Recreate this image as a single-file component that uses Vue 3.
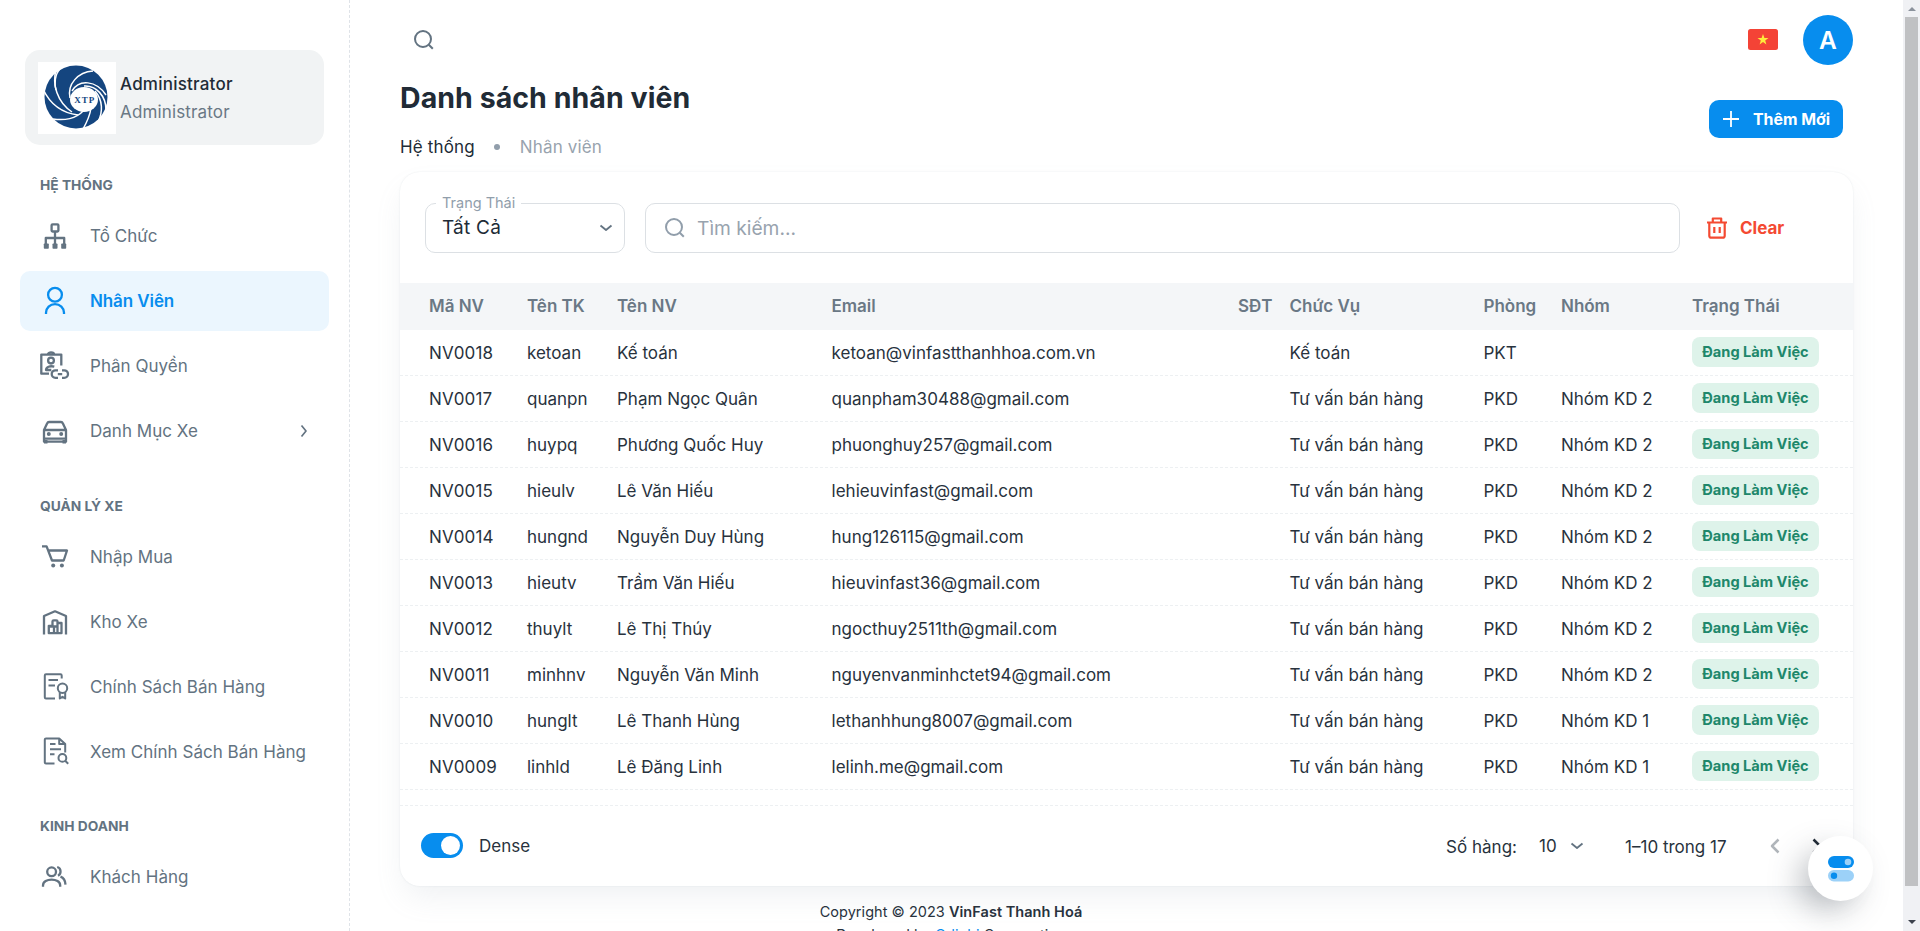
<script setup>
import { ref } from 'vue'

const groups = [
  {
    title: 'HỆ THỐNG',
    items: [
      { icon: 'org', label: 'Tổ Chức' },
      { icon: 'user', label: 'Nhân Viên', active: true },
      { icon: 'badge', label: 'Phân Quyền' },
      { icon: 'car', label: 'Danh Mục Xe', expandable: true }
    ]
  },
  {
    title: 'QUẢN LÝ XE',
    items: [
      { icon: 'cart', label: 'Nhập Mua' },
      { icon: 'warehouse', label: 'Kho Xe' },
      { icon: 'policy', label: 'Chính Sách Bán Hàng' },
      { icon: 'policySearch', label: 'Xem Chính Sách Bán Hàng' }
    ]
  },
  {
    title: 'KINH DOANH',
    items: [{ icon: 'users', label: 'Khách Hàng' }]
  }
]

const icons = {
  org: '<rect x="11.6" y="3.3" width="6.8" height="7.2" rx="1"/><path d="M15 10.5V24M5.8 24v-7h18.4v7"/><g fill="currentColor" stroke="none"><rect x="3.8" y="22.5" width="5" height="5.2" rx=".8"/><rect x="12.5" y="22.5" width="5" height="5.2" rx=".8"/><rect x="21.2" y="22.5" width="5" height="5.2" rx=".8"/></g>',
  user: '<circle cx="15" cy="8.7" r="6.9"/><path d="M6 28v-1.2a9 8.7 0 0 1 18 0V28"/>',
  badge: '<path d="M9 22.700H1.300V3.600h20V14.500"/><path d="M8 3.600C8 .8 14 .8 14 3.600"/><circle cx="11" cy="9.600" r="2.900"/><path d="M14.300 15.600c-4.300-1-8.300.3-8.300 3.400h5.300"/><path d="M18 19.300h-2.500a3.800 3.800 0 0 0 0 7.600H18M22 19.300h2.200a3.800 3.800 0 0 1 0 7.600H22M17.800 23.100h4.400"/>',
  car: '<path d="M4 14v11.700h22V14M4 14l3.200-6.800q.5-1.200 1.800-1.200h12q1.300 0 1.800 1.200L26 14zM4 22.700h22"/><g fill="currentColor" stroke="none"><circle cx="8.800" cy="18" r="2"/><circle cx="21.200" cy="18" r="2"/><path d="M4 24h3.500v3.600H4zM22.500 24H26v3.600h-3.500z"/></g>',
  cart: '<path d="M2 4.300h4.600l5.400 14.200h11.700L27 8.500H8.200"/><circle cx="13.200" cy="23.600" r="2" fill="currentColor" stroke="none"/><circle cx="21.900" cy="23.600" r="2" fill="currentColor" stroke="none"/>',
  warehouse: '<path d="M4 27.500V9l11-4.700L26 9v18.500"/><path d="M8.800 26.200v-7.400h3.700V14.500q0-1.200 1.200-1.200h2.600q1.200 0 1.200 1.200v11.700zM9 19.500h8.500M14 19.500v6.700M17.500 16h4v10.200h-4"/>',
  policy: '<path d="M15 26.500H6q-1.200 0-1.200-1.200V3.500q0-1.200 1.200-1.200h14.500q1.200 0 1.200 1.200V6.500M8.500 8h9.500M8.500 13.500h6.500"/><circle cx="22.500" cy="16.200" r="4.700"/><path d="M19.800 20.200v6.300l2.700-1.700 2.700 1.700v-6.300"/>',
  policySearch: '<path d="M14.500 26.500H6q-1.200 0-1.200-1.200V2.600q0-1.200 1.200-1.200h13.200L25.200 7v8.500M19.200 1.400V7h6M10 7h5.500M10 12.200h11M10 17.200h4.500"/><circle cx="22.400" cy="20.900" r="3.900"/><path d="m25.200 23.800 3 3"/>',
  users: '<circle cx="11.600" cy="9.800" r="4.400"/><path d="M3 24.800v-1.200c0-8 17.200-8 17.200 0v1.200M17.200 5c4.300 1 4.300 7 .8 8.700M20.500 14.600c3 1.200 4.800 4 5 8"/>'
}

const columns = ['Mã NV', 'Tên TK', 'Tên NV', 'Email', 'SĐT', 'Chức Vụ', 'Phòng', 'Nhóm', 'Trạng Thái']
const sales = 'Tư vấn bán hàng'
const rows = [
  ['NV0018', 'ketoan', 'Kế toán', 'ketoan@vinfastthanhhoa.com.vn', '', 'Kế toán', 'PKT', ''],
  ['NV0017', 'quanpn', 'Phạm Ngọc Quân', 'quanpham30488@gmail.com', '', sales, 'PKD', 'Nhóm KD 2'],
  ['NV0016', 'huypq', 'Phương Quốc Huy', 'phuonghuy257@gmail.com', '', sales, 'PKD', 'Nhóm KD 2'],
  ['NV0015', 'hieulv', 'Lê Văn Hiếu', 'lehieuvinfast@gmail.com', '', sales, 'PKD', 'Nhóm KD 2'],
  ['NV0014', 'hungnd', 'Nguyễn Duy Hùng', 'hung126115@gmail.com', '', sales, 'PKD', 'Nhóm KD 2'],
  ['NV0013', 'hieutv', 'Trầm Văn Hiếu', 'hieuvinfast36@gmail.com', '', sales, 'PKD', 'Nhóm KD 2'],
  ['NV0012', 'thuylt', 'Lê Thị Thúy', 'ngocthuy2511th@gmail.com', '', sales, 'PKD', 'Nhóm KD 2'],
  ['NV0011', 'minhnv', 'Nguyễn Văn Minh', 'nguyenvanminhctet94@gmail.com', '', sales, 'PKD', 'Nhóm KD 2'],
  ['NV0010', 'hunglt', 'Lê Thanh Hùng', 'lethanhhung8007@gmail.com', '', sales, 'PKD', 'Nhóm KD 1'],
  ['NV0009', 'linhld', 'Lê Đăng Linh', 'lelinh.me@gmail.com', '', sales, 'PKD', 'Nhóm KD 1']
]
const blades = [
  'M18 8C14 22 19 40 34 50',
  'M5 27C12 42 24 51 40 53',
  'M32 36C29 22 40 10 55 9',
  'M34 29C41 17 58 18 68 33',
  'M46 24C58 23 68 34 68 48',
  'M57 29C65 38 65 50 60 60',
  'M53 46C52 53 49 60 45 67',
  'M50 42C43 56 30 59 15 57',
  'M18 28C16 22 17 12 22 7'
]
const dense = ref(true)
</script>

<template>
  <div class="page">
    <aside class="sidebar">
      <div class="account">
        <svg class="logo" viewBox="0 0 78 72">
          <rect width="78" height="72" fill="#fff" />
          <circle cx="38" cy="35" r="31.500" fill="#14457f" />
          <g fill="none" stroke="#fff" stroke-width="1.500">
            <path v-for="d in blades" :key="d" :d="d" />
          </g>
          <ellipse cx="46" cy="37.500" rx="14" ry="12.500" fill="#fff" />
          <text x="46.800" y="40.500" text-anchor="middle" class="logo-text">XTP</text>
        </svg>
        <div>
          <div class="name">Administrator</div>
          <div class="role">Administrator</div>
        </div>
      </div>
      <nav v-for="g in groups" :key="g.title">
        <h6>{{ g.title }}</h6>
        <div v-for="i in g.items" :key="i.label" class="item" :class="{ active: i.active }">
          <svg class="nav-icon" :class="{ fine: i.icon.startsWith('policy') }" viewBox="0 0 30 30" v-html="icons[i.icon]" />
          <span>{{ i.label }}</span>
          <svg v-if="i.expandable" class="more" viewBox="0 0 10 14"><path d="m2.500 1.500 4.500 5.500-4.500 5.500" /></svg>
        </div>
      </nav>
    </aside>

    <main>
      <header class="topbar">
        <svg class="search" viewBox="0 0 24 24"><circle cx="11" cy="11" r="8" /><path d="m16.800 16.800 4 4" /></svg>
        <svg class="flag" viewBox="0 0 30 21">
          <rect width="30" height="21" rx="2.500" fill="#f44336" />
          <path fill="#ffeb3b" d="m15 5 1.400 4h4.100l-3.300 2.500 1.200 4-3.400-2.400-3.400 2.400 1.200-4L9.500 9h4.100z" />
        </svg>
        <div class="avatar">A</div>
      </header>

      <section class="heading">
        <div>
          <h1>Danh sách nhân viên</h1>
          <div class="crumbs"><span>Hệ thống</span><i></i><span class="muted">Nhân viên</span></div>
        </div>
        <button class="add">
          <svg viewBox="0 0 18 18"><path d="M9 1v16M1 9h16" /></svg>Thêm Mới
        </button>
      </section>

      <section class="card">
        <div class="filters">
          <fieldset class="select">
            <legend>Trạng Thái</legend>
            <span>Tất Cả</span>
            <svg class="caret" viewBox="0 0 14 8"><path d="m1.500 1.500 5.500 4.500 5.500-4.500" /></svg>
          </fieldset>
          <div class="field">
            <svg class="search" viewBox="0 0 24 24"><circle cx="11" cy="11" r="8" /><path d="m16.800 16.800 4 4" /></svg>
            <span>Tìm kiếm...</span>
          </div>
          <div class="clear">
            <svg viewBox="0 0 22 22"><path d="M1 5.500h20M6.800 5V1.500h8.400V5M3.300 5.500v13.200q0 2 2 2h11.400q2 0 2-2V5.500M8.300 10v6M13.700 10v6" /></svg>
            Clear
          </div>
        </div>

        <div class="row head"><span v-for="c in columns" :key="c">{{ c }}</span></div>
        <div v-for="r in rows" :key="r[0]" class="row">
          <span v-for="(v, n) in r" :key="n" :class="{ code: n === 0, mail: n === 3 }">{{ v }}</span>
          <b>Đang Làm Việc</b>
        </div>
        <div class="spacer"></div>

        <div class="foot">
          <div class="switch" :class="{ on: dense }" @click="dense = !dense"></div>
          <span>Dense</span>
          <span class="per-page">Số hàng:</span>
          <span class="count">10</span>
          <svg class="caret" viewBox="0 0 14 8"><path d="m1.500 1.500 5.500 4.500 5.500-4.500" /></svg>
          <span class="range">1–10 trong 17</span>
          <svg class="page-arrow off" viewBox="0 0 10 16"><path d="M8.500 1.500 2 8l6.500 6.500" /></svg>
          <svg class="page-arrow" viewBox="0 0 10 16"><path d="M1.500 1.500 8 8l-6.500 6.500" /></svg>
        </div>
      </section>

      <footer>
        <div>Copyright © 2023 <strong>VinFast Thanh Hoá</strong></div>
        <div>Developed by <a>Odinbi</a> Corporation</div>
      </footer>
    </main>

    <div class="fab">
      <svg viewBox="0 0 26 26">
        <rect width="26" height="12" rx="6" fill="#078dee" />
        <circle cx="20" cy="6" r="3.300" fill="#9cd1f8" />
        <rect y="14" width="26" height="11.500" rx="5.750" fill="#9cd1f8" />
        <circle cx="6" cy="19.800" r="3.200" fill="#078dee" />
      </svg>
    </div>

    <div class="scrollbar">
      <svg viewBox="0 0 8 4"><path d="M0 4 4 0l4 4z" fill="#8b929c" /></svg>
      <div class="thumb"></div>
      <svg viewBox="0 0 8 4"><path d="m0 0 4 4 4-4z" fill="#3c424c" /></svg>
    </div>
  </div>
</template>

<style>
body { margin: 0; overflow: hidden; }
</style>

<style scoped>
* { box-sizing: border-box; }
.page {
  position: relative;
  display: flex;
  width: 100%;
  height: 931px;
  overflow: hidden;
  background: #fff;
  color: #212b36;
  font: 400 17px/26px Inter, "Liberation Sans", sans-serif;
  white-space: nowrap;
}
svg { display: block; flex: none; fill: none; stroke-linejoin: round; }

.sidebar { flex: none; width: 350px; padding: 50px 20px 0; border-right: 1px dashed #dfe3e8; }
.account {
  display: flex;
  align-items: center;
  gap: 4px;
  height: 95px;
  margin: 0 5px;
  padding: 0 13px;
  border-radius: 15px;
  background: #f1f3f4;
}
.logo { width: 78px; height: 72px; }
.logo-text { font: 700 9px "Liberation Serif", serif; fill: #14457f; letter-spacing: 1px; }
.name, .role { line-height: 28px; }
.name { font-weight: 500; letter-spacing: .22px; }
.role { color: #6a7885; letter-spacing: .15px; }
nav + nav { margin-top: -.5px; }
h6 {
  height: 61px;
  margin: 0;
  padding: 30px 20px 0;
  color: #637381;
  font-size: 13.750px;
  font-weight: 700;
  line-height: 20px;
}
.item {
  display: flex;
  align-items: center;
  height: 60px;
  margin-bottom: 5px;
  padding: 0 20px;
  border-radius: 10px;
  color: #637381;
}
.item span { flex: 1; margin-left: 20px; letter-spacing: .03px; }
.item.active { background: #ebf6fe; color: #078dee; }
.item.active span { font-weight: 600; letter-spacing: -.1px; }
.nav-icon { width: 30px; height: 30px; stroke: currentColor; stroke-width: 2.300; }
.nav-icon.fine { stroke-width: 2; }
.more { width: 10px; height: 14px; stroke: #637381; stroke-width: 1.700; }

main { flex: 1; min-width: 0; padding: 0 50px; }
.topbar { display: flex; align-items: center; height: 80px; padding-left: 12px; }
.search { width: 24px; height: 24px; stroke: #637381; stroke-width: 2; }
.flag { width: 30px; height: 21px; margin: -2px 25px 0 auto; }
.avatar {
  width: 50px;
  height: 50px;
  border-radius: 50%;
  background: #078dee;
  color: #fff;
  font-size: 24.500px;
  font-weight: 600;
  line-height: 50px;
  text-align: center;
}
.heading { display: flex; justify-content: space-between; height: 92px; }
h1 { margin: 0; font-size: 28.500px; font-weight: 700; line-height: 35px; letter-spacing: .06px; }
.crumbs { display: flex; align-items: center; margin-top: 18px; line-height: 28px; letter-spacing: .15px; }
.crumbs i { width: 6px; height: 6px; margin: 0 20px 0 19px; border-radius: 50%; background: #919eab; }
.crumbs .muted { color: #98a3ae; }
.add {
  display: flex;
  align-items: center;
  gap: 13px;
  height: 38px;
  margin: 20px 10px 0 0;
  padding: 0 13px;
  border: 0;
  border-radius: 10px;
  background: #078dee;
  color: #fff;
  font: 700 15.900px Inter, sans-serif;
}
.add svg { width: 18px; height: 18px; stroke: #fff; stroke-width: 1.800; }

.card {
  height: 714px;
  border-radius: 20px;
  background: #fff;
  box-shadow: 0 0 2px rgba(145, 158, 171, .2), 0 15px 30px -5px rgba(145, 158, 171, .14);
}
.filters { display: flex; height: 111px; padding: 31px 25px 0; }
.select {
  display: flex;
  align-items: center;
  justify-content: space-between;
  width: 200px;
  height: 59px;
  margin: -9px 20px 0 0;
  padding: 0 11px 9px 16px;
  border: 1px solid #dce0e4;
  border-radius: 10px;
  font-size: 19px;
  letter-spacing: .25px;
}
.select legend { margin-left: -6px; padding: 0 6px; color: #919eab; font-size: 14.500px; line-height: 18px; letter-spacing: 0; }
.caret { width: 14px; height: 8px; stroke: #637381; stroke-width: 1.800; }
.field {
  display: flex;
  align-items: center;
  gap: 10px;
  width: 1035px;
  height: 50px;
  padding-left: 17px;
  border: 1px solid #dce0e4;
  border-radius: 10px;
  color: #98a3ae;
  font-size: 19.200px;
}
.field .search { stroke: #919eab; }
.clear { display: flex; align-items: center; gap: 12px; height: 50px; margin-left: 26px; color: #f44a32; font-weight: 700; }
.clear svg { width: 22px; height: 22px; stroke: currentColor; stroke-width: 2.200; }

.row {
  display: grid;
  grid-template-columns: 98px 90px 214.500px 406.500px 51.500px 194px 77.500px 131px 127px;
  align-items: center;
  height: 46px;
  padding-left: 29px;
  border-bottom: 1px dashed #edf0f2;
}
.row, .foot, footer { color: #28323d; }
.head { height: 47px; padding-bottom: 1px; border: 0; background: #f4f6f8; color: #6a7885; font-weight: 600; letter-spacing: -.02px; }
.code { letter-spacing: .15px; }
.mail { letter-spacing: .02px; }
.row b {
  height: 30px;
  margin-bottom: 1px;
  border-radius: 8px;
  background: #def3ea;
  color: #20876b;
  font-size: 14.600px;
  line-height: 30px;
  text-align: center;
}
.spacer { height: 16px; border-bottom: 1px dashed #edf0f2; }
.foot { display: flex; align-items: center; height: 79px; padding-left: 21px; }
.switch { width: 42px; height: 25px; margin-right: 16px; padding: 3px; border-radius: 13px; background: #c4cdd5; }
.switch.on { padding-left: 20px; background: #078dee; }
.switch::after { content: ""; display: block; width: 19px; height: 19px; border-radius: 50%; background: #fff; }
.per-page { width: 93px; margin-left: 916px; padding-top: 2px; }
.foot .count { width: 31px; }
.range { width: 145px; margin-left: 41px; padding-top: 2px; }
.page-arrow { width: 10px; height: 16px; stroke: #212b36; stroke-width: 2.500; }
.page-arrow.off { margin-right: 32px; stroke: #b0b5ba; }

footer { width: 1102px; padding-top: 15px; font-size: 14.500px; line-height: 22.500px; text-align: center; letter-spacing: .03px; }
footer strong { font-weight: 600; }
footer a { color: #078dee; }

.fab {
  position: absolute;
  top: 836px;
  right: 47px;
  display: grid;
  place-items: center;
  width: 65px;
  height: 65px;
  border-radius: 50%;
  background: #fff;
  box-shadow: -12px 12px 32px -4px rgba(60, 68, 80, .36);
}
.fab svg { width: 26px; height: 26px; }

.scrollbar {
  display: flex;
  flex: none;
  flex-direction: column;
  align-items: center;
  width: 17px;
  padding: 7px 0;
  background: #f0f1f4;
}
.scrollbar svg { width: 8px; height: 4px; }
.thumb { width: 13px; height: 869px; margin: 6px 0 auto; background: #c0c1c3; }
</style>
